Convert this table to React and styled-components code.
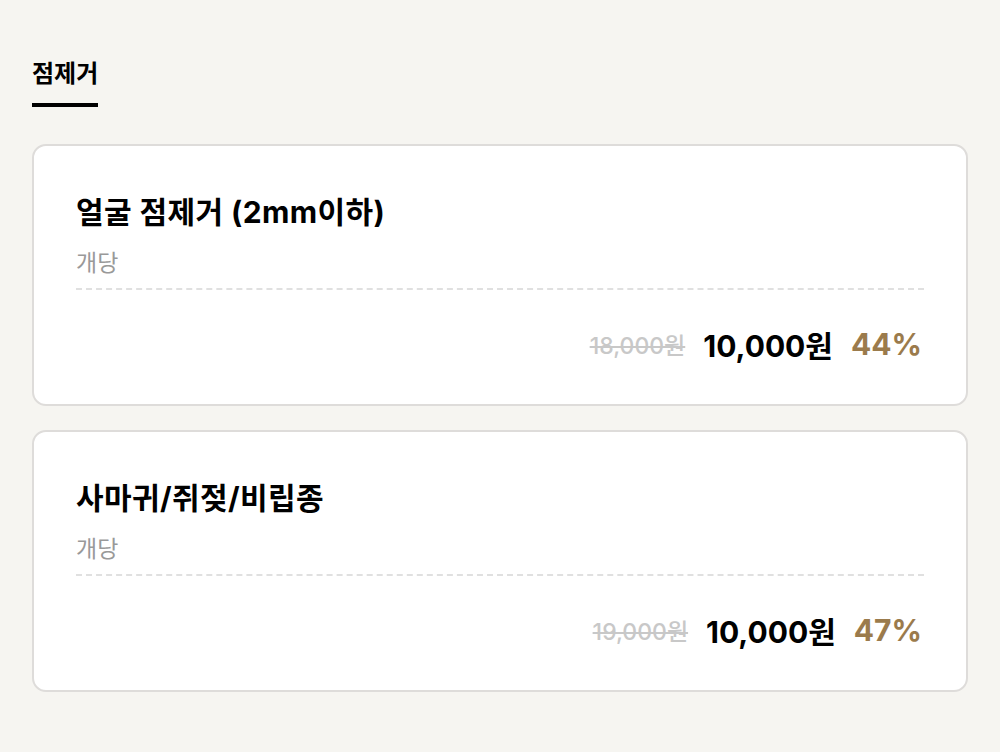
import React from "react"
import styled, { createGlobalStyle } from "styled-components"

const GlobalStyle = createGlobalStyle`
 html, body {
  margin:0;
  padding:0;
  background:#f6f5f1;
  font-family:"Inter","Noto Sans CJK KR",sans-serif;
 }
`
const Page = styled.div`
 width:1000px;
 min-height:752px;
 padding:58px 32px 40px;
 box-sizing:border-box;
`
const Tabs = styled.div`
 display:flex;
 margin-bottom:37px;
`
const Tab = styled.div`
 font-size:24px;
 font-weight:700;
 color:#000;
 line-height:32px;
 padding-bottom:13px;
 border-bottom:4px solid #000;
 letter-spacing:0;
`
const List = styled.div`
 display:flex;
 flex-direction:column;
 gap:24px;
`
const Card = styled.div`
 background:#fff;
 border:2px solid #dedcda;
 border-radius:14px;
 padding:47px 42px 42px;
`
const Title = styled.h2`
 margin:0;
 font-size:30px;
 font-weight:700;
 line-height:38px;
 color:#000;
 letter-spacing:0.4px;
`
const Unit = styled.div`
 margin-top:17px;
 font-size:23px;
 line-height:30px;
 color:#999;
 padding-bottom:10px;
 border-bottom:2px dashed #e0e0e0;
`
const PriceRow = styled.div`
 display:flex;
 justify-content:flex-end;
 align-items:center;
 gap:18px;
 margin-top:36px;
 height:36px;
 padding-right:2px;
`
const OldPrice = styled.span`
 font-size:23px;
 font-weight:500;
 color:#c8c8c8;
 text-decoration:line-through;
`
const Price = styled.span`
 font-size:30px;
 font-weight:700;
 color:#000;
`
const Rate = styled.span`
 font-size:30px;
 font-weight:700;
 color:#9b7b4c;
`

const items = [
 { title: "얼굴 점제거 (2mm이하)", old: "18,000원", price: "10,000원", rate: "44%" },
 { title: "사마귀/쥐젖/비립종", old: "19,000원", price: "10,000원", rate: "47%" }
]

export default function App() {
 return (
  <Page>
   <GlobalStyle />
   <Tabs>
    <Tab>점제거</Tab>
   </Tabs>
   <List>
    {items.map((item) => (
     <Card key={item.title}>
      <Title>{item.title}</Title>
      <Unit>개당</Unit>
      <PriceRow>
       <OldPrice>{item.old}</OldPrice>
       <Price>{item.price}</Price>
       <Rate>{item.rate}</Rate>
      </PriceRow>
     </Card>
    ))}
   </List>
  </Page>
 )
}
